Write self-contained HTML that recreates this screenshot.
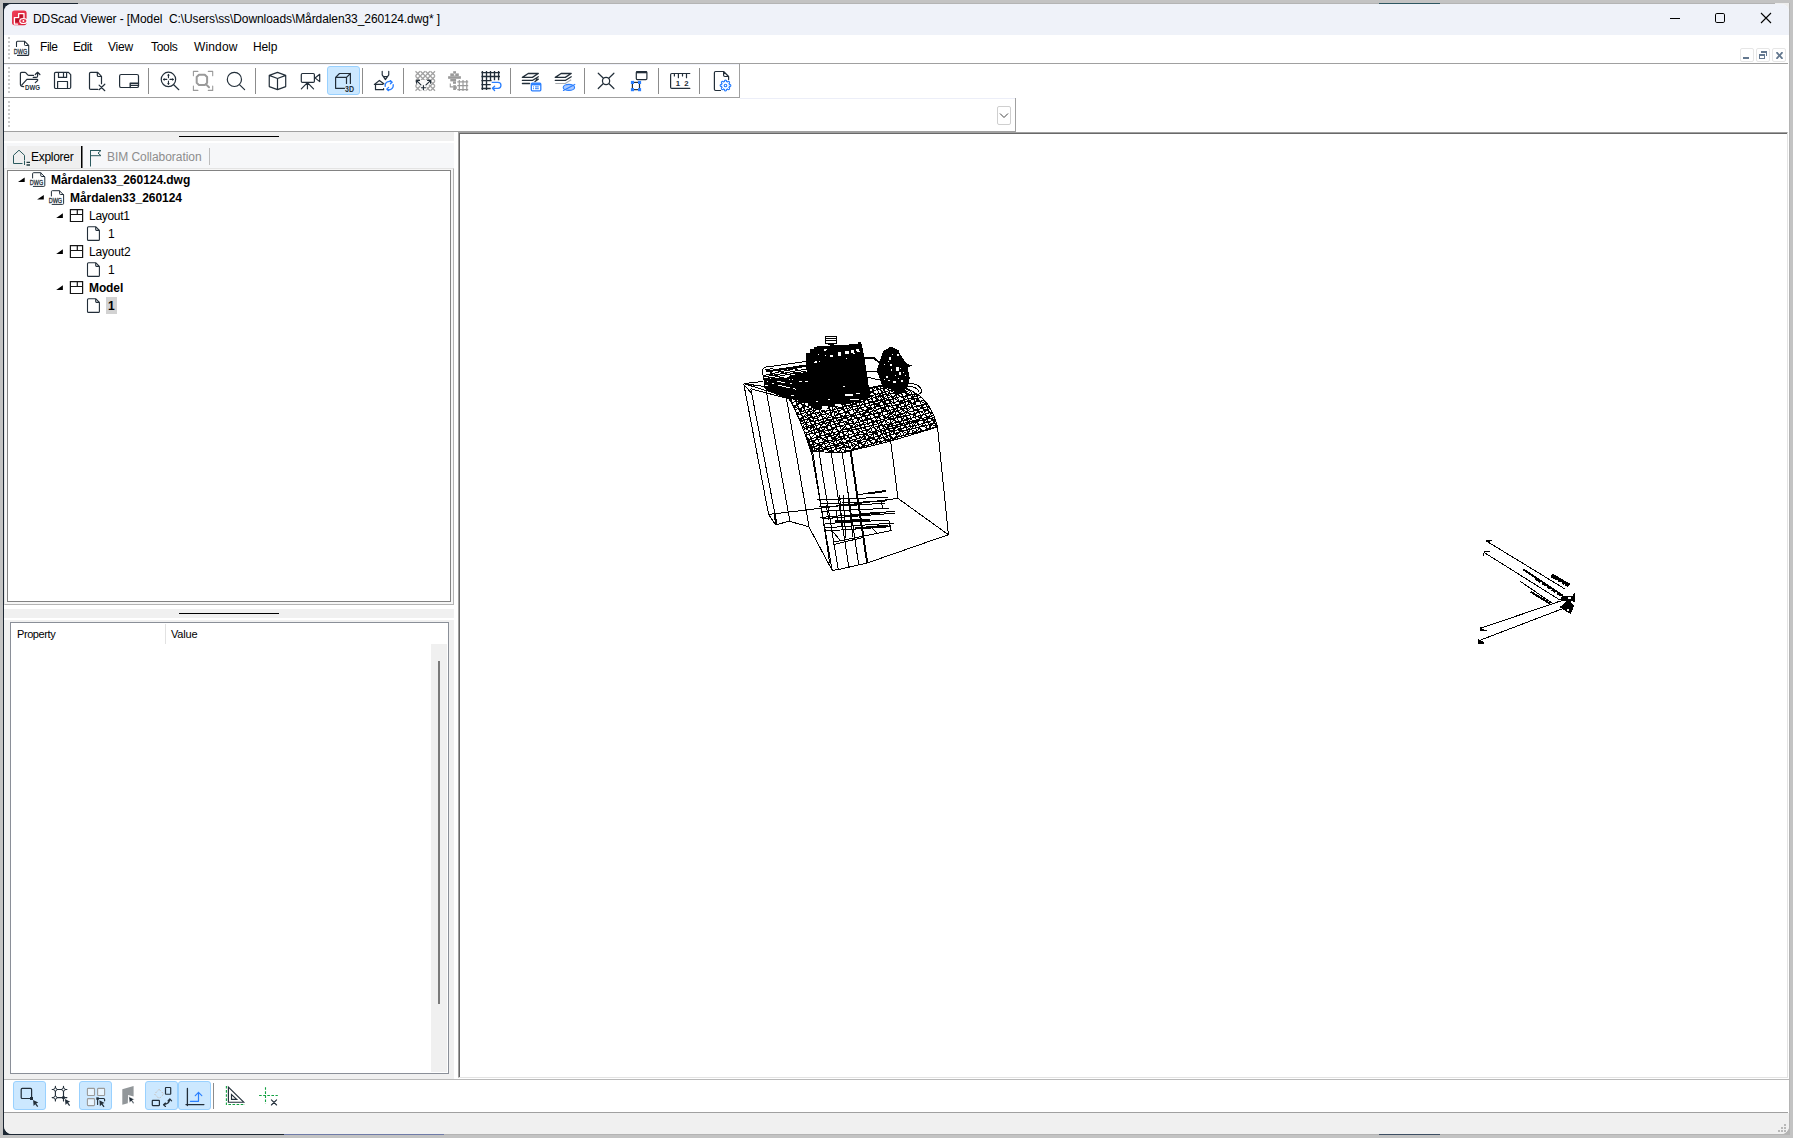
<!DOCTYPE html>
<html lang="en">
<head>
<meta charset="utf-8">
<title>DDScad Viewer</title>
<style>
*{box-sizing:border-box;margin:0;padding:0}
html,body{width:1793px;height:1138px;overflow:hidden;background:#c3c3c3}
body{position:relative;font-family:"Liberation Sans",sans-serif;font-size:12px;color:#000}
.a{position:absolute}
.t{position:absolute;white-space:pre;line-height:16px;height:16px;font-size:12px}
.b{font-weight:bold}
.hl{position:absolute;height:1px;background:#a0a0a0}
.vl{position:absolute;width:1px;background:#a0a0a0}
.sep{position:absolute;width:1px;background:#8c8c8c;top:68px;height:26px}
.sel{position:absolute;background:#cce8ff;border:1px solid #99d1ff;border-radius:3px;width:33px;height:29px}
.grip{position:absolute;left:8px;width:2px;background:repeating-linear-gradient(to bottom,#cacaca 0,#cacaca 2px,transparent 2px,transparent 4px)}
svg{position:absolute;left:0;top:0;overflow:visible}
.i{fill:none;stroke:#222e39;stroke-width:1.2;stroke-linecap:round;stroke-linejoin:round}
.g{fill:none;stroke:#9a9a9a;stroke-width:1.25;stroke-linecap:round;stroke-linejoin:round}
.bl{fill:none;stroke:#2a7fff;stroke-width:1.25;stroke-linecap:round;stroke-linejoin:round}
.st{font-family:"Liberation Sans",sans-serif;font-weight:bold;fill:#222e39;stroke:none}
.mdi{position:absolute;top:48px;width:14px;height:14px;border:1px solid #e6e6e6;border-radius:2px;background:#fff}
</style>
</head>
<body>
<!-- window frame -->
<div class="a" style="left:3px;top:3px;width:1787px;height:1132px;background:#b4b4b4"></div>
<div class="a" style="left:3px;top:3px;width:30px;height:1132px;background:#1c2733"></div>
<div class="a" style="left:3px;top:3px;width:75px;height:20px;background:#1c2733"></div>
<div class="a" style="left:1775px;top:3px;width:14px;height:14px;background:#eee"></div>
<div class="a" style="left:3px;top:1134px;width:281px;height:1px;background:#1c2733"></div>
<div class="a" style="left:284px;top:1134px;width:160px;height:1px;background:#6f7ba8"></div>
<div class="a" style="left:1379px;top:3px;width:61px;height:1px;background:#2d5661"></div>
<div class="a" style="left:1379px;top:1134px;width:61px;height:1px;background:#3d4f63"></div>
<div class="a" id="winbody" style="left:4px;top:4px;width:1785px;height:1130px;background:#fff;border-radius:8px"></div>
<!-- title bar -->
<div class="a" style="left:4px;top:4px;width:1785px;height:31px;background:#eff2f9;border-radius:8px 8px 0 0"></div>
<div class="t" id="title" style="letter-spacing:-0.081px;left:33px;top:11px">DDScad Viewer - [Model  C:\Users\ss\Downloads\Mårdalen33_260124.dwg* ]</div>
<!-- menu bar -->
<div class="grip" style="top:37px;height:24px"></div>
<div class="t" id="m1" style="letter-spacing:-0.44px;left:40px;top:39px">File</div>
<div class="t" id="m2" style="letter-spacing:-0.45px;left:73px;top:39px">Edit</div>
<div class="t" id="m3" style="letter-spacing:-0.2px;left:108px;top:39px">View</div>
<div class="t" id="m4" style="letter-spacing:-0.32px;left:151px;top:39px">Tools</div>
<div class="t" id="m5" style="letter-spacing:0.15px;left:194px;top:39px">Window</div>
<div class="t" id="m6" style="letter-spacing:-0.12px;left:253px;top:39px">Help</div>
<div class="mdi" style="left:1740px"></div>
<div class="mdi" style="left:1756px"></div>
<div class="mdi" style="left:1772px"></div>
<div class="hl" style="left:4px;top:63px;width:1784px"></div>
<!-- toolbar 1 -->
<div class="hl" style="left:4px;top:64px;width:735px;background:#f1f3fb"></div>
<div class="grip" style="top:67px;height:28px"></div>
<div class="sel" style="left:327px;top:66px"></div>
<div class="sep" style="left:148px"></div>
<div class="sep" style="left:255px"></div>
<div class="sep" style="left:362px"></div>
<div class="sep" style="left:403px"></div>
<div class="sep" style="left:510px"></div>
<div class="sep" style="left:584px"></div>
<div class="sep" style="left:658px"></div>
<div class="sep" style="left:699px"></div>
<div class="hl" style="left:4px;top:97px;width:736px"></div>
<div class="vl" style="left:739px;top:64px;height:34px"></div>
<!-- toolbar 2 (combo) -->
<div class="grip" style="top:101px;height:28px"></div>
<div class="vl" style="left:1015px;top:98px;height:33px"></div>
<div class="a" style="left:997px;top:106px;width:14px;height:19px;border:1px solid #cfcfcf;border-radius:2px;background:#fff"></div>
<div class="hl" style="left:4px;top:131px;width:1012px"></div>
<div class="hl" style="left:740px;top:98px;width:275px;background:#eceef8"></div>
<!-- left panel -->
<div class="a" style="left:4px;top:132px;width:450px;height:9px;background:#f0f0f0"></div>
<div class="a" style="left:179px;top:136px;width:100px;height:1px;background:#000"></div>
<div class="a" style="left:4px;top:143px;width:450px;height:26px;background:#f6f7f9"></div>
<div class="a" style="left:7px;top:146px;width:74px;height:23px;background:#efefef"></div>
<div class="a" style="left:81px;top:146px;width:1px;height:23px;background:#000"></div>
<div class="a" style="left:82px;top:146px;width:1px;height:23px;background:#777"></div>
<div class="a" style="left:209px;top:148px;width:1px;height:17px;background:#bdbdbd"></div>
<div class="t" id="tab1" style="letter-spacing:-0.29px;left:31px;top:149px">Explorer</div>
<div class="t" id="tab2" style="letter-spacing:-0.05px;left:107px;top:149px;color:#8d8d8d">BIM Collaboration</div>
<!-- tree box -->
<div class="a" style="left:4px;top:168px;width:450px;height:437px;background:#f6f6f6;border:1px solid #b4b4b4;border-top-color:#e4e4e4;border-left-color:#e4e4e4"></div>
<div class="a" style="left:7px;top:170px;width:444px;height:432px;background:#fff;border:1px solid #828282"></div>
<div class="t b" id="tr1" style="letter-spacing:-0.042px;left:51px;top:172px">Mårdalen33_260124.dwg</div>
<div class="t b" id="tr2" style="letter-spacing:-0.05px;left:70px;top:190px">Mårdalen33_260124</div>
<div class="t" id="tr3" style="letter-spacing:-0.29px;left:89px;top:208px">Layout1</div>
<div class="t" id="tr4" style="left:108px;top:226px">1</div>
<div class="t" id="tr5" style="letter-spacing:-0.19px;left:89px;top:244px">Layout2</div>
<div class="t" id="tr6" style="left:108px;top:262px">1</div>
<div class="t b" id="tr7" style="letter-spacing:-0.11px;left:89px;top:280px">Model</div>
<div class="a" style="left:106px;top:297px;width:11px;height:17px;background:#d2d2d2"></div>
<div class="t b" id="tr8" style="left:108px;top:298px">1</div>
<!-- splitter -->
<div class="a" style="left:4px;top:609px;width:450px;height:9px;background:#f0f0f0"></div>
<div class="a" style="left:179px;top:613px;width:100px;height:1px;background:#000"></div>
<!-- property box -->
<div class="a" style="left:4px;top:620px;width:450px;height:459px;background:#f0f0f0"></div>
<div class="a" style="left:10px;top:622px;width:439px;height:452px;background:#fff;border:1px solid #8a8f98"></div>
<div class="a" style="left:165px;top:624px;width:1px;height:20px;background:#e2e2e2"></div>
<div class="t" id="ph1" style="font-size:11px;letter-spacing:-0.42px;left:17px;top:626px">Property</div>
<div class="t" id="ph2" style="font-size:11px;letter-spacing:-0.2px;left:171px;top:626px">Value</div>
<div class="a" style="left:431px;top:644px;width:16px;height:428px;background:#f0f0f0"></div>
<div class="a" style="left:438px;top:661px;width:2px;height:343px;background:#7a7a7a"></div>
<!-- canvas -->
<div class="a" style="left:458px;top:132px;width:1330px;height:946px;background:#fff;border-left:1px solid #a0a0a0;border-top:1px solid #a0a0a0;border-right:1px solid #e3e3e3;border-bottom:1px solid #e3e3e3"></div>
<div class="a" style="left:459px;top:133px;width:1328px;height:944px;background:#fff;border-left:1px solid #696969;border-top:1px solid #696969"></div>
<!-- bottom toolbar -->
<div class="hl" style="left:4px;top:1079px;width:1785px;background:#b9b9b9"></div>
<div class="sel" style="left:13px;top:1081px"></div>
<div class="sel" style="left:79px;top:1081px"></div>
<div class="sel" style="left:145px;top:1081px"></div>
<div class="sel" style="left:178px;top:1081px"></div>
<div class="a" style="left:213px;top:1083px;width:1px;height:26px;background:#8c8c8c"></div>
<div class="hl" style="left:4px;top:1112px;width:1784px"></div>
<!-- status bar -->
<div class="a" style="left:4px;top:1113px;width:1785px;height:21px;background:#f0f0f0;border-radius:0 0 8px 8px"></div>
<svg width="1793" height="1138" viewBox="0 0 1793 1138">
<!-- app icon -->
<g id="appicon">
<defs><linearGradient id="rg" x1="0" y1="0" x2="1" y2="1"><stop offset="0" stop-color="#f0405a"/><stop offset="1" stop-color="#d91e36"/></linearGradient></defs>
<rect x="12" y="10.6" width="14.6" height="14.6" rx="2.6" fill="url(#rg)"/>
<path d="M17.6 24.2h-3.2v-6.6h4.2v-3.9h5.4v4" fill="none" stroke="#fff" stroke-width="1.3" stroke-linejoin="round" stroke-linecap="round"/>
<rect x="19.7" y="14.6" width="3" height="3.6" fill="#b5122a"/><rect x="15.4" y="18.4" width="4.3" height="3.8" fill="#b5122a"/>
<ellipse cx="23.4" cy="21" rx="3.6" ry="2.5" fill="#e3304a" stroke="#fff" stroke-width="1.2"/>
<circle cx="23.4" cy="21" r="0.9" fill="#fff"/>
</g>
<!-- window controls -->
<g stroke="#000" stroke-width="1" fill="none">
<path d="M1670 18.5h10"/>
<rect x="1715.5" y="13.5" width="9" height="9" rx="1.3"/>
<path d="M1761 13l10 10M1771 13l-10 10" stroke-width="1.1"/>
</g>
<!-- mdi controls -->
<g fill="#64788f" stroke="none">
<rect x="1743" y="57" width="6" height="2"/>
<path d="M1761 51h6v5h-1v-3h-5z"/>
<path d="M1759 54h6v5h-6zM1760 56v2h4v-2z" fill-rule="evenodd"/>
<path d="M1776.2 52l1.4 0 1.9 2.3 1.9-2.3 1.4 0 0 1.2-2.1 2.3 2.1 2.3 0 1.2-1.4 0-1.9-2.3-1.9 2.3-1.4 0 0-1.2 2.1-2.3-2.1-2.3z"/>
</g>
<!-- combo chevron -->
<path d="M1000 113.5l4 4 4-4" fill="none" stroke="#444" stroke-width="1"/>
<!-- menu DWG icon -->
<g id="dwgm">
<path class="i" d="M16.5 46.5v-4.3a1 1 0 0 1 1-1h7l4.2 4.2v9a1 1 0 0 1-1 1h-10.2" style="stroke-width:1.1"/>
<path class="i" d="M24.5 41.5v3.2a.8.8 0 0 0 .8.8h3" style="stroke-width:1"/>
<text class="st" x="13.8" y="54" font-size="7.6" textLength="13.4" lengthAdjust="spacingAndGlyphs" style="font-weight:normal;stroke:#222e39;stroke-width:.28">DWG</text>
</g>
<!-- ===== toolbar icons ===== -->
<!-- 1 open dwg -->
<path class="i" d="M23.7 86.6c-2 0-3.3-.6-3.3-2.4v-10.5a1.3 1.3 0 0 1 1.3-1.3h3.3c1.6 0 2 3 3.8 3h4.7"/>
<path class="i" d="M21.9 84.8l5-5.4h10.2c.8 0 .8.8.3 1.300l-2.100 1.900"/>
<path class="i" d="M33.300 77.400h2.800a1.500 1.500 0 0 0 1.500-1.500v-3.400M35.300 74.500l2.300-2.200 2.300 2.200"/>
<text class="st" x="25" y="89.800" font-size="7.400" textLength="15" lengthAdjust="spacingAndGlyphs">DWG</text>
<!-- 2 save -->
<path class="i" d="M55.700 72.400h12.800l2.200 2.200v12.700a1.200 1.200 0 0 1-1.200 1.200h-13.800a1.200 1.200 0 0 1-1.200-1.200v-13.700a1.200 1.200 0 0 1 1.200-1.200zM58.500 72.400v5h8.100v-5M63.500 72.400v5M57.600 88.500v-7h9.900v7"/>
<!-- 3 doc x -->
<path class="i" d="M97.700 89.400h-7a1.200 1.200 0 0 1-1.200-1.200v-14.600a1.200 1.200 0 0 1 1.200-1.200h7l3.800 3.900v7.400M97.300 72.600v2.600a1.300 1.300 0 0 0 1.300 1.300h2.900M99.100 85.100l5.700 5.600M104.800 84.200l-5.700 5.500"/>
<!-- 4 rect inset -->
<rect class="i" x="119.600" y="74.500" width="18.900" height="13" rx="1.600"/>
<path class="i" d="M130.200 87.500v-4.200h8.300M130.500 85.400h8" style="stroke-width:1.400"/>
<!-- 5 zoom pan -->
<circle class="i" cx="168.450" cy="79.400" r="7.200"/>
<path class="i" d="M173.700 84.700l5.100 5"/>
<path class="i" d="M168.450 74.800v3M168.450 81v3M163.800 79.400h3M170 79.400h3" style="stroke-width:1.100"/>
<path d="M168.450 73.800l1.500 1.800h-3zM168.450 85l1.500-1.800h-3zM162.800 79.400l1.800-1.500v3zM174.100 79.400l-1.800-1.500v3z" fill="#222e39"/>
<!-- 6 zoom fit (gray) -->
<path class="g" d="M193.400 75.800v-4.400h4.500M208.300 71.400h4.400v4.400M212.700 86v4.400h-4.400M197.900 90.400h-4.500v-4.400" style="stroke-width:1.100"/>
<path class="g" d="M199 74.700h5.800l2.300 2.300v5.800l-2.300 2.300h-5.800l-2.300-2.300v-5.800zM206.300 84.600l2.700 2.600" style="stroke-width:2"/>
<!-- 7 magnifier -->
<circle class="i" cx="234.400" cy="79.400" r="7.100"/>
<path class="i" d="M239.700 84.800l4.900 4.900"/>
<!-- 8 cube -->
<path class="i" d="M277.500 72.400l8.200 3v11.200l-8.200 3.050-8.250-3.050v-11.200zM269.250 75.400l8.250 3.100 8.200-3.100M277.500 78.500v11.100"/>
<!-- 9 camera -->
<rect class="i" x="301.300" y="73.500" width="13.100" height="8.900" rx="1.200"/>
<path class="i" d="M315 77.900l4.700-3.600v7.300zM307.450 82.700v6.100M307.450 82.700l-6.100 6.100M307.450 82.700l6.100 6.100"/>
<!-- 10 3D -->
<path class="i" d="M344.500 88.300h-8.900v-10.900h10.900v6.100M335.600 77.400l3.900-3.900h10.900v10M346.500 77.400l3.900-3.900"/>
<text class="st" x="345" y="91.600" font-size="8.600" textLength="9" lengthAdjust="spacingAndGlyphs">3D</text>
<!-- 11 home refresh -->
<path class="i" d="M382.200 71.250v3.650l3.200 4.700 3.350-4.700v-3.650M383.900 76.600h3.200" style="stroke-width:1.150"/>
<path class="i" d="M374.400 84.400l5-3.950 4.450 3.400M374.400 84.400h8.300M375.500 84.400v5.250h8.100v-1.100"/>
<path class="bl" d="M385.200 86.400a4.300 4.300 0 0 1 6.600-4.300M393.200 84.600a4.300 4.300 0 0 1-6.400 4.500M390.300 80.600l1.900 1.600-1.800 1.600M388.600 87.400l-1.900 1.700 1.800 1.600"/>
<!-- 12 hatch gray -->
<g class="g" style="stroke-width:1.25;stroke-linecap:butt;stroke:#a2a2a2">
<path d="M415.500 71.300l19.500 19.500M420.500 71.300l14.500 14.500M425.500 71.300l9.500 9.500M430.500 71.300l4.500 4.500M415.500 76.300l14.500 14.500M415.500 81.300l9.500 9.500M415.500 86.300l4.500 4.500"/>
<path d="M435 71.300l-19.500 19.500M430 71.300l-14.500 14.500M425 71.300l-9.500 9.500M420 71.300l-4.500 4.500M435 76.300l-14.500 14.500M435 81.300l-9.500 9.500M435 86.300l-4.500 4.500"/>
</g>
<path d="M416 80h15v3.500l-4.500 3v4h-6v-4l-4.500-3z" fill="#fff" opacity=".9"/>
<path class="i" d="M420.900 84.900l-4.200-4.300M426 84.900l4.500-4.300M416.600 83.200v-2.800h2.900M427.600 80.400h3v2.800M423.400 85.600v4.100M421.400 87.700h4.100" style="stroke-width:1.150"/>
<!-- 13 gray blob + grid -->
<g fill="#9a9a9a">
<rect x="453.200" y="71.200" width="2.800" height="2"/><rect x="450.300" y="73.400" width="8.500" height="2.600"/><rect x="448.100" y="76.200" width="12.800" height="2.600"/>
<rect x="450.300" y="79" width="5.800" height="2.400"/><rect x="453" y="81.400" width="3" height="2.400"/>
<rect x="453.200" y="85.200" width="2.700" height="4.800"/><rect x="455.500" y="86.300" width="1.300" height="2.600"/>
</g>
<g fill="#fff"><rect x="453.900" y="74.100" width="1.400" height="1.400"/></g>
<path class="g" d="M450.300 83.500v3.400h2.800" style="stroke-width:1.100;stroke-linecap:butt"/>
<path class="g" d="M459.300 80v11M463 80v11M466.800 80v11M457.300 81.800h10.900M457.300 85.700h10.900M457.300 89.600h10.900" style="stroke-width:1.200;stroke-linecap:butt"/>
<!-- 14 grid return -->
<path class="i" d="M482.400 71v18.900M486.500 71v18.900M490.500 71v9.700M494.500 71v9.200M498.600 71v9.200M481.300 72.600h18.700M481.300 76.500h18.700M481.300 80.600h10.300M481.300 84.600h9.400M481.300 88.500h9.400" style="stroke-width:1.350;stroke-linecap:butt"/>
<path class="bl" d="M492.300 82.400h5.700a2.950 2.950 0 0 1 0 5.900h-5.400M494.600 86.300l-2.200 2 2.200 2.200" style="stroke-width:1.300"/>
<!-- 15 layers list -->
<path class="i" d="M522.400 77.400l5.800-3.900h10.100l-5.900 3.900zM522.400 80.450h10l5.900-3.700M522.400 83.500h7.200M536.300 79l2 .1-3.300 2.400" style="stroke-width:1.300"/>
<rect x="531.300" y="83.200" width="9.500" height="7.600" rx="1" fill="#fff" stroke="#2a7fff" stroke-width="1.300"/>
<path d="M531.300 84.300h9.500" stroke="#2a7fff" stroke-width="2.200"/>
<path d="M533 86.900h1M535 86.900h3.800M533 88.700h1M535 88.700h3.800" stroke="#2a7fff" stroke-width="1"/>
<!-- 16 layers eye -->
<path class="i" d="M555.300 77.400l5.800-3.900h10.100l-5.900 3.900zM555.300 80.450h10l5.900-3.700" style="stroke-width:1.300"/>
<path d="M555.300 83.500h10l5.900-3.700" fill="none" stroke="#a9adb2" stroke-width="1.200"/>
<ellipse cx="568.900" cy="87.400" rx="5.700" ry="3" fill="#a9c9ff" stroke="#2a7fff" stroke-width="1.100"/>
<path d="M563.400 90.500l11.400-6.100" stroke="#2a7fff" stroke-width="1.100" stroke-linecap="round"/>
<!-- 17 X circle -->
<path class="i" d="M598.250 73.200l15.650 15.300M613.900 73.200l-15.650 15.300"/>
<circle cx="606.060" cy="81" r="3.600" fill="#fff" stroke="#222e39" stroke-width="1.250"/>
<!-- 18 window + box handles -->
<rect class="i" x="636.300" y="71.600" width="10.600" height="8" rx="1"/>
<path d="M636.300 72.200h10.600" stroke="#222e39" stroke-width="2.200"/>
<rect class="i" x="632.400" y="82.400" width="7.100" height="7.250" style="stroke-linejoin:miter"/>
<g fill="#2a7fff"><rect x="630.900" y="80.900" width="3.100" height="3.100"/><rect x="638" y="80.900" width="3.100" height="3.100"/><rect x="630.900" y="88.100" width="3.100" height="3.100"/><rect x="638" y="88.100" width="3.100" height="3.100"/></g>
<!-- 19 ruler -->
<path class="i" d="M689.800 73.500h-18a1.200 1.200 0 0 0-1.200 1.200v12.500a1.200 1.200 0 0 0 1.200 1.200h18M674.400 73.500v2.500M678.400 73.500v4.200M682.500 73.500v2.500M686.500 73.500v4.200"/>
<text class="st" x="675.800" y="85.800" font-size="7.800">1</text><text class="st" x="684.300" y="85.800" font-size="7.800">2</text>
<!-- 20 doc gear -->
<path class="i" d="M720.500 90.500h-4.900a1.200 1.200 0 0 1-1.200-1.200v-16.600a1.200 1.200 0 0 1 1.200-1.200h8l5 5v3.100M723.600 71.700v3.600a1.200 1.200 0 0 0 1.200 1.200h3.600"/>
<g transform="translate(725.500 85.500)">
<circle r="3.900" fill="#fff" stroke="#2a7fff" stroke-width="1.200"/>
<g fill="#fff" stroke="#2a7fff" stroke-width="1.100">
<circle cx="0" cy="-4.200" r="1.150"/><circle cx="2.970" cy="-2.970" r="1.150"/><circle cx="4.200" cy="0" r="1.150"/><circle cx="2.970" cy="2.970" r="1.150"/><circle cx="0" cy="4.200" r="1.150"/><circle cx="-2.970" cy="2.970" r="1.150"/><circle cx="-4.200" cy="0" r="1.150"/><circle cx="-2.970" cy="-2.970" r="1.150"/>
</g>
<circle r="3.400" fill="#fff"/>
<circle r="1.300" fill="none" stroke="#2a7fff" stroke-width="1.100"/>
</g>
<!-- ===== left panel icons ===== -->
<!-- explorer tab icon -->
<path d="M13.500 163.500v-8.200l5.500-5.100 5.500 5.100v5.200M13.500 163.500h9" fill="none" stroke="#2b5a5e" stroke-width="1" stroke-linejoin="round"/>
<path d="M24.500 161v4" stroke="#2b5a5e" stroke-width="1"/>
<path d="M26.500 162.300h3.500M26.500 165h3.500" stroke="#1f3a3d" stroke-width="1.300"/>
<!-- flag -->
<path d="M90.500 150v16.500M90.500 150.500h10.500l-3 2.600 3 2.600h-10.500" fill="none" stroke="#2b5a5e" stroke-width="1" stroke-linejoin="miter"/>
<!-- tree expanders -->
<g fill="#000">
<path d="M18 182h6.700v-4.600z"/><path d="M37.100 199.500h6.700v-4.400z"/><path d="M56.200 217.900h6.700v-4.700z"/><path d="M56.200 253.900h6.700v-4.700z"/><path d="M56.200 289.900h6.700v-4.700z"/>
</g>
<!-- tree dwg icons -->
<g id="dwt1">
<path class="i" d="M32.600 178v-4.300a1 1 0 0 1 1-1h7l4.200 4.200v8.500a1 1 0 0 1-1 1h-10.500M40.800 172.900v2.800a.8.800 0 0 0 .8.800h3" style="stroke-width:1"/>
<text class="st" x="29.800" y="184.700" font-size="6.600" textLength="13.400" lengthAdjust="spacingAndGlyphs" style="font-weight:normal;stroke:#222e39;stroke-width:.28">DWG</text>
</g>
<g id="dwt2">
<path class="i" d="M51.400 196v-4.300a1 1 0 0 1 1-1h7l4.200 4.200v8.500a1 1 0 0 1-1 1h-10.500M59.600 190.900v2.800a.8.800 0 0 0 .8.800h3" style="stroke-width:1"/>
<text class="st" x="48.700" y="202.700" font-size="6.600" textLength="13.400" lengthAdjust="spacingAndGlyphs" style="font-weight:normal;stroke:#222e39;stroke-width:.28">DWG</text>
</g>
<!-- layout icons -->
<g fill="none" stroke="#151515" stroke-width="1.200">
<path d="M70.400 209.600h12.200v11.900h-12.200zM70.400 214.500h12.200M77.300 209.600v4.900"/>
<path d="M70.400 245.600h12.200v11.900h-12.200zM70.400 250.500h12.200M77.300 245.600v4.900"/>
<path d="M70.400 281.600h12.200v11.900h-12.200zM70.400 286.500h12.200M77.300 281.600v4.900"/>
</g>
<!-- page icons -->
<g class="i" style="stroke-width:1.100">
<path d="M88.500 226.800h7.400l3.500 3.500v9.100a1 1 0 0 1-1 1h-9.900a1 1 0 0 1-1-1v-11.600a1 1 0 0 1 1-1zM95.700 227v2.600a.8.800 0 0 0 .8.800h2.700"/>
<path d="M88.500 262.800h7.400l3.500 3.500v9.100a1 1 0 0 1-1 1h-9.900a1 1 0 0 1-1-1v-11.600a1 1 0 0 1 1-1zM95.700 263v2.600a.8.800 0 0 0 .8.800h2.700"/>
<path d="M88.500 298.800h7.400l3.500 3.500v9.100a1 1 0 0 1-1 1h-9.900a1 1 0 0 1-1-1v-11.600a1 1 0 0 1 1-1zM95.700 299v2.600a.8.800 0 0 0 .8.800h2.700"/>
</g>
<!-- ===== bottom toolbar icons ===== -->
<!-- B1 -->
<rect class="i" x="21.200" y="1088.400" width="10.400" height="10.100" rx="1"/>
<rect x="30" y="1097" width="3" height="3" fill="#222e39"/>
<path d="M33.100 1100l5.200 2.600-2.100.9 2 2.700-1 .7-2-2.700-1.600 1.700z" fill="#222e39"/>
<!-- B2 -->
<path class="i" d="M52.200 1089.500h14.700M52.200 1097.600h14.700M55.400 1086.300v14.600M63.500 1086.300v14.600" style="stroke-width:1.150"/>
<circle cx="55.400" cy="1089.500" r="1.500" fill="#fff" stroke="#222e39" stroke-width="1"/><circle cx="63.500" cy="1089.500" r="1.500" fill="#fff" stroke="#222e39" stroke-width="1"/><circle cx="55.400" cy="1097.600" r="1.500" fill="#fff" stroke="#222e39" stroke-width="1"/><circle cx="63.500" cy="1097.600" r="1.700" fill="#222e39"/>
<path d="M65 1099.100l5.200 2.600-2.100.9 2 2.700-1 .7-2-2.700-1.600 1.700z" fill="#222e39"/>
<!-- B3 -->
<g fill="#fff" fill-opacity=".55" stroke="#9a9a9a" stroke-width="1.100">
<rect x="87.400" y="1088.400" width="7.100" height="7.100" rx=".8"/><rect x="97.600" y="1088.400" width="7" height="7.100" rx=".8"/><rect x="87.400" y="1098.600" width="7.100" height="7" rx=".8"/>
</g>
<rect x="96.300" y="1097.300" width="2.500" height="2.500" fill="#222e39"/>
<path class="i" d="M97.600 1098.500h6a1 1 0 0 1 1 1v1.300M97.600 1098.500v5.900" style="stroke-width:1.150"/>
<path d="M99.400 1100.300l5.200 2.600-2.100.9 2 2.700-1 .7-2-2.700-1.600 1.700z" fill="#222e39"/>
<!-- B4 -->
<path d="M122.300 1089.350l11.300-3.350v10.400l-5.500-1.400-.3 8.150-5.500 1.550z" fill="#92979a"/>
<path d="M128.800 1096.600l5.600 2.800-2.200.9 2 2.800-1 .7-2-2.800-1.700 1.800z" fill="#222e39" stroke="#fff" stroke-width=".5"/>
<!-- B5 -->
<path d="M159.100 1089.400l4.600 4.600-4.600 4.600-4.600-4.600z" fill="none" stroke="#c9bdb4" stroke-width="1" stroke-dasharray="2 1.500"/>
<rect class="i" x="165.500" y="1087.500" width="5.200" height="6.750" rx=".5" style="stroke-linejoin:miter"/>
<rect class="i" x="152.300" y="1100.400" width="7.100" height="5.200" rx=".5" style="stroke-linejoin:miter"/>
<path class="i" d="M163.600 1104.600c3.500-.4 5.800-2.200 6.200-5.500M165.500 1103l-2 1.700 2 1.800M168 1100.900l1.800-2 1.800 2" style="stroke-width:1.150"/>
<!-- B6 -->
<path class="i" d="M187.400 1088.400v17.200M186 1104.600h17.900" style="stroke-width:1.300"/>
<path class="bl" d="M190.400 1101.300h8.100v-8.900M195.300 1095.700l3.200-3.300 3.300 3.300" style="stroke-width:1.200"/>
<!-- B7 -->
<path d="M226.400 1086v18.500h18.600" fill="none" stroke="#10a040" stroke-width="1.100" stroke-dasharray="2.600 1.500"/>
<path class="i" d="M228.400 1087.200v15h15.300zM231.500 1094.600v4.750h5.200z" style="stroke-width:1.150;stroke-linejoin:miter"/>
<!-- B8 -->
<path d="M259.100 1095.500h18.700M265.500 1087.200v16.600" fill="none" stroke="#10a040" stroke-width="1.100" stroke-dasharray="2.600 1.500"/>
<path class="i" d="M271.400 1099.800l5.200 5.200M276.600 1099.800l-5.200 5.200" style="stroke-width:1.100"/>
<!-- resize grip -->
<g fill="#b8b8b8"><rect x="1784" y="1124" width="2" height="2"/><rect x="1781" y="1127" width="2" height="2"/><rect x="1784" y="1127" width="2" height="2"/><rect x="1778" y="1130" width="2" height="2"/><rect x="1781" y="1130" width="2" height="2"/><rect x="1784" y="1130" width="2" height="2"/></g>
<!-- ===== wireframe model 1 ===== -->
<defs>
<pattern id="hx" width="7" height="6" patternUnits="userSpaceOnUse" patternTransform="rotate(-14)">
<rect width="7" height="6" fill="#fff"/>
<path d="M0 0.500h7M0 3.500h7M0 0l7 6M7 0l-7 6M3.500 0v6M0 2l3.500 -2M3.500 6l3.500-2" stroke="#000" stroke-width="1" fill="none"/>
</pattern>
<pattern id="hx2" width="5" height="5" patternUnits="userSpaceOnUse" patternTransform="rotate(20)">
<rect width="5" height="5" fill="#000"/>
<rect x="1" y="1" width="1.600" height="1.600" fill="#fff"/><rect x="3.400" y="3.200" width="1.200" height="1.400" fill="#fff"/>
</pattern>
</defs>
<g id="model1" shape-rendering="crispEdges" fill="none" stroke="#000" stroke-width="1">
<!-- terrain hatch -->
<clipPath id="tc"><path d="M787.8 396.3C797 412 805 432 811 451.5L843 452.7L889.5 441.5L937.5 427C934 413 928 402 919 395L908 389L880 385.5L869 388L870 397.5L816 409.8L808.6 401.2Z"/></clipPath>
<path d="M787.8 396.3C797 412 805 432 811 451.5L843 452.7L889.5 441.5L937.5 427C934 413 928 402 919 395L908 389L880 385.5L869 388L870 397.5L816 409.8L808.6 401.2Z" fill="#fff" stroke="none"/>
<g clip-path="url(#tc)"><path d="M764.2 364.1L781.3 358.5M769 366.5L786 360.9M767 370.9L787.4 365.7L803 361.4M771.6 372.3L789.2 368.4L803.1 365L819.4 360.5M773.3 376.5L793.1 370.1L810.3 365.4L823.3 362.2M770.4 379.6L782.7 377.8L794.6 374.2L811.5 368.9L830.6 363.2L843.7 360.5M767.2 384.6L785.6 379.1L799.8 375.5L818.2 370.9L835.9 366.6L851.3 362.5M772.6 387.3L786.2 383.7L805.7 378.3L824 372.6L844.6 368.4L865.4 362M776.5 388.5L795.9 383.5L811 380.6L823.7 376L840.5 372.5L860.2 367.1L880.8 361.2M775.1 392.8L790.6 389.6L810.6 383L830.8 379L847.2 373.8L860.7 370.1L877.2 365.8L889.2 363.2M780.1 396.1L794.1 391.5L806.9 387.9L826.6 383.5L842.5 378.1L856 375L876.3 368.6L895.4 363.3L908.9 360M776.4 399.5L790.1 396.4L805.8 391.9L821.4 387.9L834.4 383.8L852.3 379.8L869.1 375.6L886.6 370.9L900.4 367L919.8 362M761 408.1L780.8 401.2L795 398.5L808.7 393.6L828.5 388.8L847.6 383.1L863.3 379.9L874.9 375.9L893.4 372.2L913.9 365.2L930.7 361.9M761.6 410.1L773.8 406.7L786 404.2L802.5 399.8L815.3 395.6L829.2 393.1L850.4 387.5L862.5 382.7L883.4 377.8L902.3 372.4L918.5 368.4L934.3 364.3M762.8 414.7L776 410.4L794.7 405.3L808 401.3L824.5 396.5L845.1 392.4L863.5 387.6L880.9 382L898.3 377.5L919.6 372.3L933.7 368.7M763.8 418.2L779.3 414.2L799.3 408.4L818.3 403.4L833.8 399.1L845.9 395.2L861.8 390.2L877.1 387.3L894.6 381.8L915.5 377L930.3 373M764.4 420.7L785.8 415.4L804.2 410.7L824.9 403.7L842.8 400.2L856.7 395.8L868.6 392.2L883.8 387.9L898.2 385.6L914.9 380.3L935.8 374.8M765.5 424.8L777.7 421.1L796.4 415L817 409.7L833.2 405.3L849.7 401.7L862.1 399L877.5 394L894.8 389.1L909.3 385.7L926.1 380.5L944.6 375.5M765.9 426.3L779.4 424L794.8 420.1L813.2 413.6L834.8 409.4L847 406L862.6 401.1L883.4 395L900.4 391.7L918.7 385.9L939.9 380.8M766.9 430L782.7 425L795 422.3L807.7 418.7L825.8 413.8L839.9 410.2L855.7 406.4L872.5 402.2L893.1 396.2L906.7 391.3L927.2 387L944.7 381.6M767.8 433.4L785.2 428.8L803.8 422.9L818.2 420.5L838.6 414.8L850.1 410.2L864.5 407L882 401.7L898.8 397.1L911.5 394.8L928.3 390.1L943.5 385.8M768.7 436.7L788.1 430.2L801.2 428L818.8 423.2L832.3 418.9L846.5 415.8L861.6 411.4L882.6 405.1L899.6 401.3L920 395.2L935 390.6M769.1 438.1L786.4 434.2L804.5 429L823.4 423.5L837.4 420.8L849.6 416.8L868.3 412.5L882.4 407.7L897.7 404.6L912.5 399.5L931.2 395.3L951.8 390.4M770.3 442.5L784.6 437.7L800.3 434.6L820.2 428L835.4 424.1L850.5 420.1L865.7 415.6L883 412.1L899.8 407.6L916.6 401.9L935.8 398L949.7 392.6M771.1 445.3L792 439.8L811.1 433.6L828.3 430.3L840.4 425.7L859.5 422.1L871.7 418.3L884.8 415L902.4 409.3L916.3 406.5L933 402L948.1 397.1M772 448.6L788.8 444.5L807.4 439.8L822.9 435.5L840.9 430.7L860.3 425.4L880.5 420.2L898 414.6L916.6 410.1L932.1 405.2L945.2 402.3M772.6 451.1L786.3 447.9L801 444.9L812.8 440.5L825.7 437.7L844.5 431.7L856.8 428.9L874.3 425L885.8 420.4L899.3 417L913.3 414.1L930.4 408.6L943.8 405.1M773.6 454.8L790.8 451.2L806.7 445.8L827.2 441.5L841.9 436.9L862.7 431.1L876.2 426.7L897.3 422.4L912.5 417.8L928.9 412.9L950.2 407.8M774.4 457.7L789.7 454.2L808.1 448.8L821 444.5L835.7 440.7L855.8 435.8L873.8 431.8L887.7 427.2L900.9 424.1L912.5 421L932.3 415.7L944.4 411.4M775.1 460.4L791.5 456.8L808.7 452L823.2 448L838.8 444L851.2 440.5L864.7 436.3L881.2 431.1L900.9 426.1L915.4 421.8L930.1 418.5L948.5 413.3M775.8 462.9L792.1 459.6L811.6 453.7L823.2 450.1L841.5 444.9L858.7 440.7L870.6 438.4L889.5 431.9L907.1 427.3L922.4 423.6L936.8 419.3L952.3 415.8M776.7 466.3L791.6 462.7L808.5 457.7L823.3 453.9L835.5 449.3L848.3 446.9L866.4 441L882.2 438L899.2 432L913 428.4L925.9 425.4L938.4 423L953.9 418M777.7 470L792.8 465L808.2 460.2L824 457.3L845.1 451.7L863 446.6L874.6 442.9L889.7 439.4L902.1 435.6L918.8 431.8L938.3 426.2L951.5 423M778.4 472.4L794.7 467.6L813.6 464.1L830 459.1L849.4 452.9L870.3 448.1L883.6 443.5L897.7 440.6L915.9 435.2L936.5 429.7L952.5 425M779.4 476.1L796 470.9L812.9 465.8L833.6 461.6L852.9 455.7L865.8 452.6L880.2 448.9L893.9 444.5L913.4 438.6L930.2 433.8L942.1 430.8M780.3 479.4L794.8 475.5L813.4 469.9L830.9 466L842.4 461.8L858.4 457.3L874 453.9L887.2 450.3L901.3 446.5L916.2 442.7L928.1 439.5L941.3 436.5L958.4 431M800.1 477.8L816.5 473.8L836.1 468.3L851.5 463.4L868.7 459.6L885.2 454.4L901.2 450.8L915.4 445.4L934.4 441.8L952.9 436.3M810.1 477.8L825.3 472.9L843.8 468.8L857.6 464.6L872.9 460.3L885.5 458.2L906.3 452.1L926.1 446.3L945.4 440.7L964.4 436.3M815.9 478.2L830 474.9L844.6 470.5L865.2 466.4L880.4 461.4L897.5 456.2L909.8 454.5L924.2 449.9L945 445.1L960.8 439.4M846.4 474.3L864.1 469.5L884.1 463.8L897 461.6L911.7 458L931.6 452.3L944.5 448.7M849.4 477.4L869.5 471.8L883.2 467.6L903.9 462.7L918.1 458.8L930.7 456L946.4 451L962.8 445.6M849.5 479.6L870.2 475.5L881.8 471.4L900.6 466.2L921.2 460.8L934.6 457.3L952.3 452.2M860.5 480.4L878 475.8L894.1 472.5L913.3 467.3L927 463L940.8 459.5L956.9 454.1M871.4 481L892 476.4L909 472.2L922.5 467.3L937.1 463.2L952 460.3M881.8 481L898.4 477.8L919.2 471.1L935.5 467.8L947.2 463.7M904.4 479.8L921.4 473.4L937.2 470.3L949.2 466.5M929.6 475.5L944.8 471.1L963.2 466.7M932.9 477.6L952 472.8L964 469.3M939.3 478.4L953.8 474.7M941.8 362.1L947 376.6L954.7 395.5L962.3 411.5M939.5 369.9L949.6 389.4L956.9 407L961.4 418.6M935 367.2L942.1 384.8L950.5 402.9L955.9 415.5L963.9 435.3M931.7 367.5L936.3 380.6L945.4 400.6L952.9 419.9L958.5 435M925.8 364.3L931.1 376.3L935.9 391.2L942.2 405L947.4 415.9L956.2 435.7L961.4 452.2M917.8 361.8L923.2 372.8L929.1 385.8L934.6 400.5L943 418.8L950.1 435.7L954.8 449.8L962.2 463.2M912.7 359.9L919.2 374.5L924.8 391L930.4 403.9L936.5 417.8L941.1 430.1L947.5 445.1L954 457.8L961.8 475.2M908.3 362.4L913.8 375.4L921.5 394.8L929.2 411.4L936.8 427.4L943.6 446.6L950 461.8L956.8 476.5M910.7 377.2L915.6 393.3L924.3 410.6L930.6 429L937 443.7L941.9 456L949.9 471M904 374L911.4 392.7L917.4 409L923.9 421.4L931.4 438.3L936.9 455L944.4 470.2M893.5 361.1L897.8 372.7L904.9 392.1L911.2 403.7L916.1 418.9L923.1 435.7L927.8 447.5L933.9 460.2L941.8 479.4M892.1 370.3L896.3 382.9L903.7 397.8L907.3 410.6L915.4 426.8L919.7 440.2L927.5 457.4L934.3 471.5M882.3 360.9L888.1 374L893.3 387.9L899.1 401.6L907.1 418.6L915.5 438.2L922.7 456.3L930 471.1M876.5 361.3L883 374.3L888.2 388.8L896.6 407.5L904.2 423.2L912.4 442.6L917.9 457.2L924.8 475.2M875.8 367.3L883.5 387.6L893.1 407.4L900.4 426.3L907.2 444.1L913.1 455.4L918.9 470.3M870.1 364.6L878.3 382.2L885.2 401.1L893.9 418.8L900.6 434.1L906.9 453.9L916.7 472.5M865.4 360.3L871.6 376.3L879.4 394.5L886 409.2L890.8 422.6L897.5 438.8L906.1 457.4L914 476.4M864.8 374L873.2 391.2L880.2 407.1L884.7 419.3L892.5 439.6L901.5 458L907.7 472.9M855.9 362.6L861.9 378.6L869.2 392.8L876.7 410.6L882.5 425.2L889.1 440.6L895.3 455.7L899.4 467.6L904.8 479M856 369.4L860.4 385L865.8 395.8L874.6 415.6L881.5 432.2L886.9 446.2L894.4 462.5L900.6 478.3M849.4 366L854.6 379.9L859 392L868.1 410.2L873.1 424.6L881.1 442.8L885.7 454.4L890.8 465.8M847.6 377L852.8 388.7L859.2 403.8L865.9 418.1L872.8 432.9L877.6 447.4L883.6 458.7L890.5 477.8M837.7 361.3L843.6 377.6L848.7 389.8L856.7 404.6L862.4 419.9L868.6 437.6L875.6 453.1L881.6 467.8L886.8 479.8M834.3 366.2L840.9 380.4L846.6 396.2L853.1 410L859.4 422.9L866.3 440.9L872.9 454L880.2 472.9M831.5 368.9L836 383.4L841.1 394.7L848.2 410.9L854.9 424.7L862.1 445L871.1 463M828.1 373.3L833.6 387.9L842.3 405.1L849.4 424.4L856 437.5L860.2 449L866.3 462.2L872.2 475.5M815.9 358.4L823.5 374.8L831 392.6L837.5 410.1L846.4 427.8L850 439.9L856.3 454.1L862.5 467.1M813.8 360.2L821.1 380.4L825.6 392.3L831.3 404L835.6 416.5L841.7 430.4L846.9 441.8L853 453L858.1 470.1M807.7 358.2L814.5 373.8L821.5 391.5L828.6 406.8L834.3 422.7L842.7 442.7L848.4 454.8L853.6 469.3M802.3 360.1L809.6 377.5L816 394.4L821.8 406L831 425.5L834.5 438.2L844.5 457.5L847.7 469.5M799.5 364.5L808.5 382.8L814.5 397L818.4 408.5L824.4 421.8L831.6 437.5L838.6 454.9L843.4 468.5L850.1 480.6M795.5 363.3L803.7 382.4L809 395.7L814.2 410.1L821.3 427.4L829.3 442.9L836.6 461.2L841.8 474.4M791.7 367.8L797.6 382L804.7 396.1L810.8 413L817.1 428.5L822.4 439.5L829.3 453.7L837.4 473.3M786.2 363.6L792.1 381.5L799.4 399.3L806.9 414.1L812.2 426.2L820.8 445.8L825.7 458.8L830.6 470.3M781.6 365.9L786.2 380.3L794.9 399.7L800.5 412.1L807.4 428.4L813.9 447.3L821 462.3M777.3 367L784.7 384.9L789.4 396.2L796.7 414.8L803.9 431.9L810.1 444.3L815.9 458.1L820.5 472.1M774.2 371.5L782.6 390.9L789.7 411.1L799.1 429.8L804.2 446.2L811.4 459.3L818.8 477.1M763.4 358.1L771.5 377.7L778.6 391.8L784.7 407.7L790.9 424.3L798.3 439.2L804.2 455.2L810.4 472.5M765.3 376.3L772.7 391.6L777.8 405.6L785.3 420.9L790.9 433.7L797.7 452.9L806 473.1M764.6 380.6L770.7 396.6L777.9 415.2L785.5 434.9L794.2 451.2L801.4 468.4M766.3 400.2L773.8 418.6L780.5 435L788.4 451.6L794.8 466.1L799.9 477.2M763.4 401.4L770.5 421.4L776.2 435.2L783.3 452L792.1 469.7M760.5 405.6L768.6 425.5L775.3 440.2L780.7 453.5L789.8 473.1M766.3 428.4L772.9 446.4L778.8 460.5L786 477.5M945 364.1L959.5 371.3M930.1 363.1L942.5 370.2L957.5 379M915.7 360.9L932.9 370.4L949 378M901.7 360.3L916.6 366.8L932.1 376.1L946.7 385.5L962.2 393.9M895.2 362.6L914.6 371.6L926.8 378L937.3 385.5L954.9 393.8M884.3 363.4L900 371.5L919.6 381.3L931.6 388.9L943.1 396.1L957.2 402.5M880.8 366.1L897.4 375.3L914.7 386L930.8 393.7L941.5 400.2L960.3 411.2M855.9 358.6L868.9 365.9L882.7 373L895.5 379.9L908.6 386.4L921.2 394.8L934.6 400.9L952.1 411.5M845.7 359.8L860.3 367.9L875.2 376.8L894.1 385.7L904.7 391.8L915 398.7L931.5 406.5L943.1 414.3L961.1 423.8M829.4 358.9L848.1 368.8L859.9 373.8L878.6 384.8L893.9 392.6L911.7 402.9L931.4 412.6L950.7 423.1L962.1 430.3M831.4 364.1L847.4 371.9L861.2 381.3L878.4 389L892.5 397.6L905.9 405.1L922.5 412.8L934.3 420.9L947.3 426.6M824.8 365.5L842 376.1L859.9 384.2L869.9 391.6L882.3 396.9L893.1 402.8L906.9 412.3L921 418.3L938.8 428L954.5 437.6M804.5 360.7L817.3 367.5L829.7 373.8L849 383.7L861.2 392.1L878.5 399.5L890.5 406.5L902.9 414.9L919.4 424.3L936.2 432.6L949.9 440.5M802.7 364L814.1 369.1L832.9 380.3L846.5 387.2L861.4 397.3L874 403.2L888.6 411.9L904.6 419.4L916.3 427L927.3 433.4L938.8 438.1L952.8 447.4M785.7 362.1L803.3 370L820.9 379.9L833 386.3L842.8 393.8L857.5 399.9L867.6 407.4L883.4 416.2L895.1 420.6L908 427.9L919.5 434.2L935.6 443.1L947.2 450.4M783.6 365.8L798.8 373.6L813.8 381L829.6 390.1L843.2 397.1L860.9 408.3L874.9 415.9L894.1 425.4L907.4 434.1L921.1 441.7L940.3 450.6M781.1 370.4L798.5 379.9L817.7 389.2L830.9 398.1L848.9 406.2L867.4 417.9L885.9 427.1L901 437L919.8 446.3L937.7 457.2M778.1 375.9L790.4 381.3L806.2 389.3L823.6 398.7L839.4 407.9L852.4 415.9L864.8 422.3L882.2 433.2L895.7 439.1L912.5 447.9L930.4 457.8M776.7 378.5L787.2 384.2L800.3 392.1L819.1 403.4L830.1 409.6L842.9 416.1L859.3 426.1L878.5 435.5L891.8 442.8L904.7 450.8L919.4 458.7L931.1 465.4M773.7 383.8L786.3 389.3L800.2 397.3L816.8 407.4L832.8 417.2L844.7 421.6L855.1 428.2L872.6 438.4L887.8 447.1L902.3 453.3L918.6 462L931.1 468.9M771.7 387.6L783.2 394.1L801.2 403.3L812.4 410.3L829.1 420L844.8 427.9L862.8 438L882.3 447.8L899.2 458L914.5 464.8L928.9 473.4M769.1 392.3L780.5 397.6L795.7 407.4L814.8 418.1L828.2 424.7L842.8 433.6L856.7 441.5L872 448.6L886.7 456.6L906.3 466.6L920.3 474.4M767.2 395.6L780.9 404.3L798.3 413.5L811.5 420.5L830 430.3L839.9 437.4L855.4 444.1L866.3 452L884.3 459.8L900.5 469.1L914.5 477.8M764.3 400.9L776.6 405.8L792.3 415.5L810.4 426.3L823.5 431.6L838.9 441.1L851.5 449.2L864.2 455.5L875 462.2L894.2 471.9L907.4 479.5M762.4 404.4L776.8 414.4L795.7 423L810.9 431.6L822.5 439L840.1 447.6L853.9 456.1L871 465L883 470.6L894.2 478.6M770.3 417.5L786.2 426L803.4 435.5L821.3 446.2L835.7 453.3L849.7 460.5L863.2 468.5L877.1 475.4M773.6 425.6L787.3 431.8L799.1 437.6L814.4 448L826.3 452.9L843.5 462.3L861.6 472.6L876.4 480.3M766.1 425.1L783 435.7L793.8 441.2L809.7 449.7L820.4 455.8L833.4 464.4L847.1 471.8M770 435.3L786.5 443.6L803.6 453.5L815.6 459.8L829.8 467.6L846.4 477.1M766.2 438.5L783.7 449.2L794.5 454.5L805.4 461.4L817.2 466.3L834.1 476.4M764.8 445.3L779.4 451.6L796.3 463L808.6 469.2L826.1 479.3M772.3 455L786.5 463.5L803.6 472.1L819.3 480.2M766.3 457.2L783.3 467.1L799.6 477.4M774.6 469.2L787.4 477.1M764.7 388.4L778.1 373.6M771.6 390.2L782.8 376.6L795.9 362.1M761.4 415.1L770.6 402.7L785.4 387.9L793 377L802.8 366M767.1 419.5L775.2 406.5L783.7 396.9L797.2 382.9L804.1 372.5L814.3 362.2M761.1 436.2L770.8 424.5L780 414.6L787.8 402.7L802.9 387.1L816.3 370.7M769.7 438.6L779.8 425.5L791.7 411.2L801.7 399.1L810.2 389.7L822.4 374.8L832 361.2M760.9 458.5L774.4 442.2L782.5 433.1L793.9 419L804.8 404.6L814.2 392.3L826.1 378L839.6 364.8M765 461.9L777.2 448.1L787.9 433.5L796.4 424.9L808.4 411.1L819.6 397.1L832.5 382.2L843 369.3M769.4 465.6L778.2 455.7L789 443.5L799.1 431.9L807.3 420.6L815.6 408.9L826.7 398.6L835.5 386.6L846.2 373L856.9 359.4M775.6 470.8L786.7 454.7L796.4 445.5L809.8 430.1L821.1 413.8L833.2 400.9L843.9 386.3L858.4 370.2L868.6 359.6M780 474.4L789.8 462.8L803.9 447.1L817.1 431L826.3 419.7L834.1 409.4L841.5 398.9L855.3 382.5L868.2 368.3L876.3 359.4M784.4 478.1L792 468.3L805.9 452.2L814.4 442.1L825.9 427L839 412.2L849.2 399.7L858.2 388L871.7 372.1M800.5 468.2L809.2 457.7L821.8 444.6L835 427.6L844.1 416.5L852.4 405.9L863.9 393.4L874.8 382.1L884.3 370.3M803.6 475.4L816.7 459.9L824.9 448L840.1 432.4L853.1 415.5L860.8 405.7L873.8 389L883.3 377.5L897.2 362M810 476.8L821.8 465.3L831.2 454.1L839.7 442.4L851.8 426.5L863.9 413.8L876.9 399.7L887.8 384.1L897.2 373.7L906.8 362.4M818.2 478.4L830.7 461.8L844.4 444.7L858 431L865.4 418.9L874 408.8L887.8 394.1L897.7 380.6L909.5 366.4M826.9 478.6L835.4 469.7L847.4 455.2L858.4 442.4L871.3 426.6L883.1 410.3L892.7 398.2L906 383.7L919.6 366.7M840 473.1L853.6 460L863.1 445.7L874.3 432L885 419.3L896.6 407.9L909 393.1L919 379.7L927.6 370.6M849.4 472.4L863.2 457.4L876.3 441.5L884.6 430.6L898.2 415.4L910.1 401.3L917.3 391.1L928.9 379.5L942.1 362.7M851.1 478.6L865.4 464.4L872.6 452.8L884.4 439.5L897.1 426.5L908.5 410.6L920.1 396.7L932.6 381.6L946.6 366.3M860.6 477.3L872.5 463.6L881.8 454.4L890.3 444.1L899.1 432.2L913.5 416.5L926.8 401L938.3 387.1L949.4 372.6M876.2 470L889.5 454.4L900.6 441.3L912 427.9L923 414.2L931.5 402.6L943.3 391.1M876.5 478.6L885.2 467.7L896.4 454.6L909 441L920.4 426.8L931.7 412.7L943 400.4L952.2 389.6M888.7 476.6L903.8 461.2L914.7 448.2L925.3 433.3L932.9 422.9L945.6 410.1L957.3 396.3M897.5 478.2L906.3 467.7L915.7 455.3L929.1 439.3L941.3 424.6L953.7 412.5L961.7 402.4M913 471L923.8 456.5L938 440.4L947.4 429L959.7 412.4M917.3 475.7L927.4 461.4L937.4 450.7L947.8 438.1L957.4 427.2M920.5 479.3L930.1 469.4L942.4 453L951.1 442.5L959.7 433.3M938.3 470.5L947.7 459.6L959.5 447.2"/></g>
<path d="M787.8 396.3C797 412 805 432 811 451.5L843 452.7L889.5 441.5L937.5 427C934 413 928 402 919 395L908 389L880 385.5L869 388L870 397.5L816 409.8L808.6 401.2Z"/>
<!-- slab left -->
<path d="M762.500 372C762 368 765 366.500 770 366.500L806 361.500M762.500 372L765.500 387L806 398M763.500 375.500L806 366M764.500 379L806 371M765 383L806 377M766 381L800 388M768 377L806 384M770 372L806 391M775 370L806 380M765 370C770 368 778 369 783 372M790 367L806 373M764 386.500L743.700 383.600M787 397L806 402"/>
<path d="M766 371.500l40 -6" stroke-width="2"/>
<path d="M764 377l42 -8M769 374l37 10M780 368l26 8"/>
<path d="M764 379.500L771 379L787 378L796 374.500L806 372.500L806 400L787 398L767 390.500L764 386Z" fill="#000"/>
<g fill="#fff" stroke="none"><rect x="777" y="381" width="4" height="1"/><rect x="781" y="382" width="4" height="1"/><rect x="778" y="385" width="4" height="1"/><rect x="782" y="386" width="4" height="1"/><rect x="786" y="387" width="4" height="1"/><rect x="772" y="383" width="2" height="1"/><rect x="789" y="379" width="1" height="1"/><rect x="792" y="379" width="1" height="1"/><rect x="799" y="381" width="3" height="1"/><rect x="790" y="383" width="2" height="1"/><rect x="795" y="385" width="1" height="1"/><rect x="797" y="386" width="1" height="1"/><rect x="800" y="386" width="1" height="2"/><rect x="793" y="388" width="2" height="1"/><rect x="795" y="389" width="1" height="1"/><rect x="797" y="393" width="2" height="1"/><rect x="799" y="392" width="1" height="1"/><rect x="791" y="395" width="3" height="1"/><rect x="767" y="381" width="1" height="1"/><rect x="765" y="385" width="3" height="1"/></g>
<!-- box outline -->
<path d="M743.700 383.600L768.600 514.500L775.600 524.900L789 521.200L808.800 526.700L832.200 570.400L838.500 569.500L867.200 563L948.400 534.700L937.500 427"/>
<path d="M743.700 383.600L787 397M750.800 388.800L787.500 398.500M743.700 383.600L763 381.500M745 386L751 392.500M750.800 388.800L776.900 524M766.300 391.200L790 521.700M786.400 398.300L809 526.400"/>
<path d="M889.500 432L898 498.400L948.400 534.700M898 498.400L806.300 510L768.800 514.400M774.400 513.800L775.600 524.900M788.500 512L789.700 521.200"/>
<path d="M810 443.700L832.200 570.400M812 447L829.700 563M818.600 449.800L838.300 569.800M831 451L848.800 566.700M842 451.700L858.600 564.200"/>
<path d="M850.600 451L867.200 563" stroke-width="2"/>
<!-- cluster -->
<path d="M858 494.700L885.700 491M817.400 499.900L887.500 497.200M819.900 504L887.500 500.900M818.600 507L885 503.300M821.100 511.300L888.700 508.300M819.900 517.500L894.900 511.300M823.600 518.700L894.900 513.200M824.800 523.600L888.700 520M824.200 527.900L893.700 523M825.400 531L891.200 526.700M833.400 542.100L891.800 530.400M833.400 544.600L864.200 537.200"/>
<path d="M839.600 495.400L842 526M843.200 495.400L845.700 538.400M848.200 496.600L853 537.200M881.400 500.300L882.600 508.900M888.700 520L891.200 530.400M832.200 531L839.600 539.600M870.300 526.100L877.700 533.500M826 505L829 520M836 510L838 522"/>
<path d="M868 493.500L885.700 491M840 505.500L862 504.200M850 515.500L880 512.500M835 521.500L870 519.500M855 528.500L888 525.500" stroke-width="2"/>
<!-- building -->
<path d="M806.200 353.900L810 353.500L810 350L814.800 349.500L814.800 347.200L830 346L836 345.500L845 345.500L858.500 344L858.500 342.500L860.500 342.500L861.500 345L863.800 357L870 397.500L851 403L816 409.800L808.600 401.200Z" fill="#000"/>
<path d="M795 385L808 381L811 405L800 402Z" fill="#000"/>
<path d="M825.500 336.500h10.500v6.500h-10.500zM825.500 338.500h10.500M825.500 340.500h10.500M831 343v4M828 345l6-1"/>
<g fill="#fff" stroke="none"><rect x="838" y="352" width="3" height="4"/><rect x="845" y="351" width="4" height="3"/><rect x="851" y="350" width="3" height="3"/><rect x="856" y="349" width="3" height="2"/><rect x="824" y="349" width="2" height="2"/><rect x="830" y="355" width="3" height="2"/><rect x="814" y="362" width="3" height="1"/><rect x="845" y="394" width="8" height="1.500"/><rect x="856" y="393" width="4" height="1"/><rect x="822" y="406" width="6" height="2"/><rect x="843" y="386" width="2" height="1"/><rect x="818" y="354" width="1" height="1"/><rect x="825" y="355" width="1" height="1"/><rect x="824" y="349" width="3" height="1"/><rect x="815" y="361" width="2" height="1"/><rect x="819" y="361" width="1" height="1"/><rect x="846" y="358" width="1" height="1"/><rect x="853" y="353" width="2" height="1"/><rect x="857" y="351" width="3" height="1"/><rect x="805" y="381" width="3" height="1"/><rect x="816" y="401" width="2" height="1"/><rect x="828" y="399" width="2" height="1"/><rect x="805" y="403" width="3" height="2"/><rect x="822" y="408" width="5" height="2"/><rect x="835" y="404" width="6" height="1.5"/><rect x="850" y="399" width="9" height="1"/></g>
<!-- pipe + tree -->
<path d="M863.800 357.600L873.700 357.600L879.800 363" stroke-width="2"/>
<path d="M864 371L878 371M866 377L880 380" />
<path d="M883.500 351.500L890.800 347.200L898.200 350.900L899.400 354.500L906.800 364.400L911 365.600L907 367L909.200 377.900L906.800 387.700L898.200 393.800L890.800 388.900L882.200 384L877.300 370.500L881 359.400Z" fill="#000"/>
<g fill="#fff" stroke="none"><rect x="889" y="357" width="2" height="3"/><rect x="897" y="354" width="2" height="2"/><rect x="896" y="367" width="3" height="4"/><rect x="899" y="372" width="2" height="3"/><rect x="886" y="376" width="2" height="2"/><rect x="893" y="381" width="3" height="2"/><rect x="901" y="380" width="2" height="2"/><rect x="890" y="364" width="1.500" height="2"/><rect x="868" y="362" width="2" height="4"/><rect x="892" y="354" width="1" height="1"/><rect x="888" y="361" width="1" height="1"/><rect x="884" y="364" width="1" height="1"/><rect x="891" y="369" width="1" height="2"/><rect x="895" y="375" width="1" height="1"/><rect x="898" y="378" width="1" height="1"/><rect x="903" y="372" width="1" height="1"/><rect x="905" y="375" width="1" height="1"/><rect x="888" y="380" width="2" height="1"/><rect x="884" y="379" width="1" height="1"/><rect x="900" y="368" width="1" height="1"/></g>
<path d="M906 384C914 382 921 386 921.500 391C921 395 915 396 908 394M905 387C912 385.500 918 388 919 391.500"/>
</g>
<!-- ===== wireframe model 2 ===== -->
<g id="model2" shape-rendering="crispEdges" fill="none" stroke="#000" stroke-width="1">
<path d="M1486.300 541L1565 589M1484 552.400L1560.500 600.400M1480.600 628.300L1560.500 601M1478.300 640.900L1569.600 606M1520.500 581.500L1551.400 602.700"/>
<path d="M1523.400 569.500L1562.800 595.800M1530.800 591.800L1550.200 603.800" stroke-width="2"/>
<path d="M1535 578L1561 595" stroke-width="3"/>
<path d="M1551.400 575.200L1569 585.500" stroke-width="4"/>
<path d="M1485.500 540.500h6.500M1485.500 541.500h4M1483.500 551.500h6M1483.500 552.500v3M1480.500 627v3.500h6M1480.500 629.500h3M1478.500 639v4h5M1478.500 641.500h4" stroke-width="1.500"/>
<path d="M1563 596h10l1.500-3v8l-3 2 2 3-3 7-4-2-6-4 4-3 2-3-6-1z" fill="#000" stroke-width="1"/>
<g fill="#fff" stroke="none"><rect x="1568" y="597" width="3" height="2"/><rect x="1567" y="609" width="2" height="1.500"/><rect x="1571" y="601" width="2" height="2"/></g>
<g fill="#fff" stroke="none"><rect x="1556" y="579.500" width="1.500" height="1.500"/><rect x="1560" y="582" width="1.500" height="1.500"/><rect x="1563.500" y="584" width="1.500" height="1.500"/><rect x="1540" y="582" width="1.500" height="1.500"/><rect x="1545" y="585.500" width="1.500" height="1.500"/><rect x="1550" y="588.500" width="1.500" height="1.500"/><rect x="1555" y="592" width="1.500" height="1.500"/></g>
</g>
</svg>
</body>
</html>
